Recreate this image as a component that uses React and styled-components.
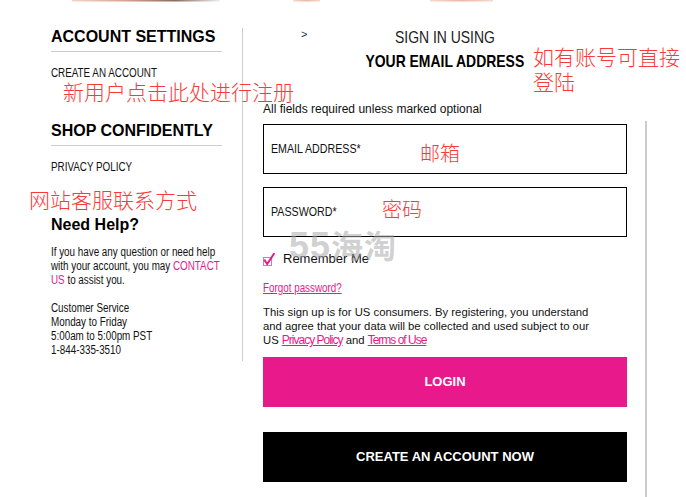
import React from 'react';
import styled, { createGlobalStyle } from 'styled-components';

const PINK = '#e8198b';
const SANS = `"Liberation Sans", Arial, sans-serif`;
const CJK = `"Noto Sans CJK SC", "Noto Sans", sans-serif`;
const SQUEEZE = 0.82;

const Global = createGlobalStyle`
  html, body { margin: 0; padding: 0; background: #fff; }
  body { font-family: ${SANS}; color: #111; overflow: hidden; }
`;

const Page = styled.div`
  position: relative;
  width: 686px;
  height: 497px;
  overflow: hidden;
`;

const Strip = styled.svg`
  display: block;
`;

/* condensed face: the narrow typeface is not installed, so a regular face is squeezed */
const Narrow = styled.span`
  display: inline-block;
  white-space: nowrap;
  transform: scaleX(${SQUEEZE});
  transform-origin: ${(p) => p.$origin || 'left'} center;
  text-decoration: ${(p) => (p.$underline ? 'underline' : 'none')};
`;

const Columns = styled.div`
  display: flex;
  align-items: flex-start;
  padding: 26px 0 0 51px;
`;

const Sidebar = styled.aside`
  width: 171px;
  padding: 0 20px 4px 0;
  border-right: 1px solid #ccc;
`;

const SideHeading = styled.h2`
  margin: ${(p) => (p.$first ? 0 : '42.5px')} 0 0;
  padding-bottom: 5px;
  border-bottom: 1px solid #ccc;
  font: bold 16px/18px ${SANS};
  color: #000;
`;

const SideLink = styled.a`
  display: block;
  margin-top: 13.5px;
  font: 12px/14px ${SANS};
  color: #111;
  text-decoration: none;
`;

const HelpTitle = styled.h3`
  margin: 42.5px 0 0;
  font: bold 16px/18px ${SANS};
  color: #000;
`;

const HelpText = styled.p`
  margin: 10.5px 0 0;
  width: ${171 / SQUEEZE}px;
  white-space: nowrap;
  transform: scaleX(${SQUEEZE});
  transform-origin: left top;
  font: 12px/14px ${SANS};
  color: #111;
`;

const PinkText = styled.span`
  color: ${PINK};
`;

const Main = styled.main`
  padding-left: 20px;
  width: 384px;
`;

const Header = styled.header`
  width: 364px;
  margin-top: -2.5px;
  display: grid;
  grid-template-columns: 1fr auto 1fr;
`;

const Chevron = styled.span`
  padding-left: 38px;
  padding-top: 2px;
  font: 11px/12px ${SANS};
  color: #1b2a4a;
`;

const TitleBlock = styled.div`
  text-align: center;
`;

const TitleLine = styled.div`
  font: ${(p) => (p.$bold ? 'bold' : 'normal')} 17px/24px ${SANS};
  color: ${(p) => (p.$bold ? '#000' : '#222')};
`;

const Required = styled.p`
  margin: 28.5px 0 0;
  font: 12px/14px ${SANS};
  color: #111;
`;

const FormBody = styled.div`
  margin-top: 5px;
  padding: 3px 18px 40px 0;
  border-right: 2px solid #ccc;
`;

const Field = styled.label`
  box-sizing: border-box;
  display: flex;
  align-items: center;
  width: 364px;
  height: 50px;
  margin-top: ${(p) => (p.$first ? 0 : '13px')};
  padding-left: 7px;
  border: 1px solid #000;
  font: 13px/16px ${SANS};
  color: #111;
`;

const CheckRow = styled.label`
  display: flex;
  align-items: center;
  gap: 8px;
  margin-top: 14px;
  font: 13px/16px ${SANS};
  color: #111;
`;

const ForgotRow = styled.div`
  margin-top: 13.5px;
  font: 12px/14px ${SANS};
`;

const Forgot = styled.a`
  color: ${PINK};
`;

const Notice = styled.p`
  margin: 10.5px 0 0;
  width: 364px;
  white-space: nowrap;
  font: 11.3px/14px ${SANS};
  color: #111;
`;

const InlineLink = styled.a`
  font-size: 12px;
  letter-spacing: -1px;
  color: ${PINK};
  text-decoration: underline;
`;

const Button = styled.button`
  display: block;
  width: 364px;
  height: 50px;
  margin-top: ${(p) => p.$gap}px;
  border: 0;
  padding: 0;
  background: ${(p) => p.$bg};
  color: #fff;
  font: bold 13px/16px ${SANS};
  cursor: pointer;
`;

const Note = styled.div`
  position: absolute;
  left: ${(p) => p.$x}px;
  top: ${(p) => p.$y}px;
  width: ${(p) => (p.$w ? `${p.$w}px` : 'auto')};
  white-space: ${(p) => (p.$w ? 'normal' : 'nowrap')};
  font: 300 ${(p) => p.$size || 21}px/25px ${CJK};
  color: #fa3a3a;
`;

const Watermark = styled.div`
  position: absolute;
  left: 289px;
  top: 224px;
  font: bold 32px/40px ${CJK};
  letter-spacing: 1px;
  color: rgba(170, 170, 170, 0.55);
  pointer-events: none;
`;

const WatermarkDigits = styled.span`
  font: bold 36px/40px ${SANS};
  letter-spacing: 1px;
`;

function CheckIcon() {
  return (
    <svg width="12" height="13" viewBox="0 0 12 13">
      <rect x="0.5" y="4.5" width="8" height="8" fill="#fff" stroke="#b98aa6" strokeWidth="1" />
      <path d="M1.8 7.5 L4.2 11 L10.8 1" fill="none" stroke={PINK} strokeWidth="2" strokeLinecap="square" />
    </svg>
  );
}

function TopStrip() {
  return (
    <Strip width="686" height="2" viewBox="0 0 686 2">
      <defs>
        <linearGradient id="g1" x1="0" x2="1">
          <stop offset="0" stopColor="#f3d4c6" />
          <stop offset="0.35" stopColor="#d9a58f" />
          <stop offset="0.7" stopColor="#8c6b5e" />
          <stop offset="1" stopColor="#efefef" />
        </linearGradient>
        <linearGradient id="g2" x1="0" x2="1">
          <stop offset="0" stopColor="#f6d8cb" />
          <stop offset="0.5" stopColor="#eeb8a4" />
          <stop offset="1" stopColor="#f6d8cb" />
        </linearGradient>
      </defs>
      <rect x="72" y="0" width="148" height="1.5" fill="url(#g1)" />
      <rect x="293" y="0" width="27" height="1.5" fill="url(#g2)" />
      <rect x="430" y="0" width="63" height="1.5" fill="url(#g2)" />
    </Strip>
  );
}

export default function App() {
  return (
    <Page>
      <Global />
      <TopStrip />
      <Columns>
        <Sidebar>
          <SideHeading $first>ACCOUNT SETTINGS</SideHeading>
          <SideLink href="#">
            <Narrow>CREATE AN ACCOUNT</Narrow>
          </SideLink>
          <SideHeading>SHOP CONFIDENTLY</SideHeading>
          <SideLink href="#">
            <Narrow>PRIVACY POLICY</Narrow>
          </SideLink>
          <HelpTitle>Need Help?</HelpTitle>
          <HelpText>
            If you have any question or need help
            <br />
            with your account, you may <PinkText>CONTACT</PinkText>
            <br />
            <PinkText>US</PinkText> to assist you.
            <br />
            <br />
            Customer Service
            <br />
            Monday to Friday
            <br />
            5:00am to 5:00pm PST
            <br />
            1-844-335-3510
          </HelpText>
        </Sidebar>
        <Main>
          <Header>
            <Chevron>&gt;</Chevron>
            <TitleBlock>
              <TitleLine>
                <Narrow $origin="center">SIGN IN USING</Narrow>
              </TitleLine>
              <TitleLine $bold>
                <Narrow $origin="center">YOUR EMAIL ADDRESS</Narrow>
              </TitleLine>
            </TitleBlock>
            <span />
          </Header>
          <Required>All fields required unless marked optional</Required>
          <FormBody>
            <Field $first>
              <Narrow>EMAIL ADDRESS*</Narrow>
            </Field>
            <Field>
              <Narrow>PASSWORD*</Narrow>
            </Field>
            <CheckRow>
              <CheckIcon />
              Remember Me
            </CheckRow>
            <ForgotRow>
              <Forgot href="#">
                <Narrow $underline>Forgot password?</Narrow>
              </Forgot>
            </ForgotRow>
            <Notice>
              This sign up is for US consumers. By registering, you understand
              <br />
              and agree that your data will be collected and used subject to our
              <br />
              US <InlineLink href="#">Privacy Policy</InlineLink> and <InlineLink href="#">Terms of Use</InlineLink>
            </Notice>
            <Button $bg={PINK} $gap={10}>LOGIN</Button>
            <Button $bg="#000" $gap={25}>CREATE AN ACCOUNT NOW</Button>
          </FormBody>
        </Main>
      </Columns>
      <Note $x={63} $y={79}>新用户点击此处进行注册</Note>
      <Note $x={29} $y={187}>网站客服联系方式</Note>
      <Note $x={533} $y={44} $w={150}>如有账号可直接登陆</Note>
      <Note $x={420} $y={140} $size={20}>邮箱</Note>
      <Note $x={382} $y={196} $size={20}>密码</Note>
      <Watermark>
        <WatermarkDigits>55</WatermarkDigits>海淘
      </Watermark>
    </Page>
  );
}
